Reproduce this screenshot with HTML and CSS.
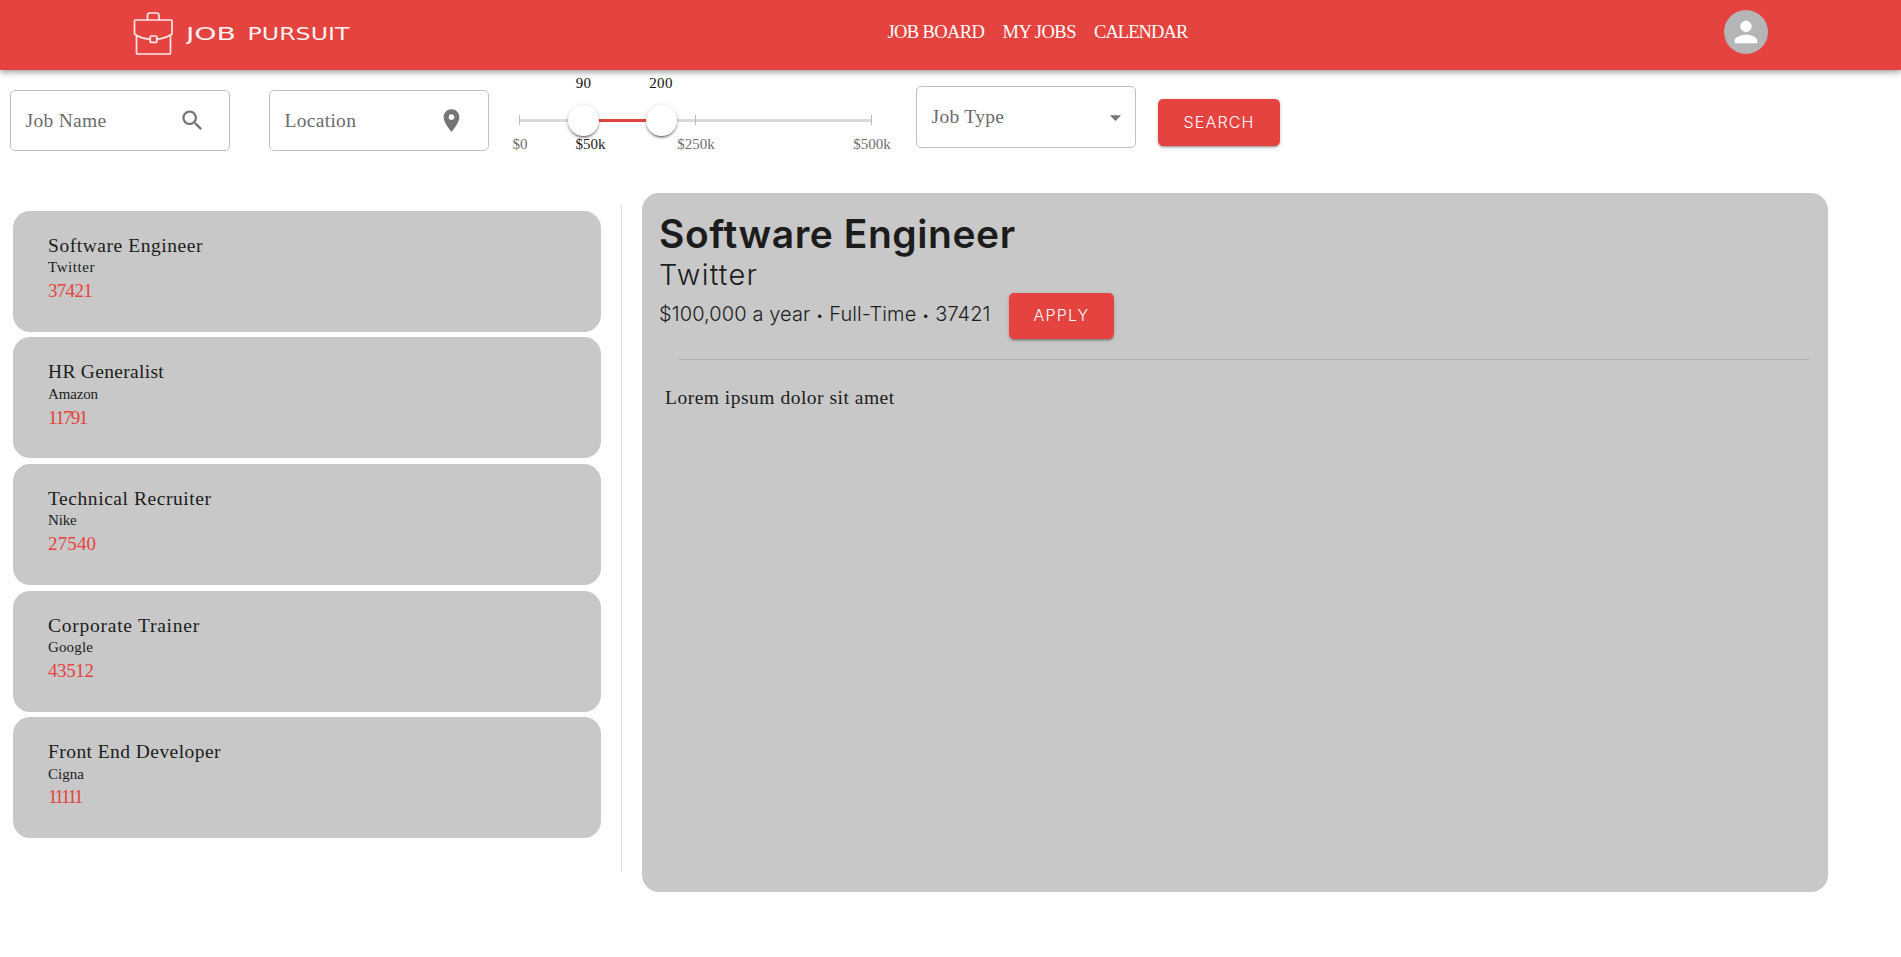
FILE: index.html
```html
<!DOCTYPE html>
<html lang="en">
<head>
<meta charset="utf-8">
<title>Job Pursuit</title>
<link rel="stylesheet" href="styles.css">
</head>
<body>
<header class="bar">
  <div class="brand">
    <svg class="case" viewBox="0 0 41 44" fill="none" stroke="#fff" stroke-opacity=".88" stroke-width="1.7" stroke-linejoin="round"><path d="M14.5 7.500V3.500Q14.500 1 17 1H23.500Q26 1 26 3.500V7.500M2.500 8H38Q39 8 39 9V22Q32 26.500 24 27.200M16.500 27.200Q8 26.500 1.500 22V9Q1.500 8 2.500 8M3.500 23.500V41Q3.500 42 4.500 42H36.500Q37.500 42 37.500 41V23.500"/><rect x="17.200" y="24" width="6.600" height="6.400" rx="1"/></svg>
    <svg class="wordmark" viewBox="0 0 166 20"><text x="0" y="16" textLength="50" lengthAdjust="spacingAndGlyphs">JOB</text><text x="61.500" y="16" textLength="102" lengthAdjust="spacingAndGlyphs">PURSUIT</text></svg>
  </div>
  <nav class="nav"><a class="n1">JOB BOARD</a><a class="n2">MY JOBS</a><a class="n3">CALENDAR</a></nav>
  <div class="avatar"><svg viewBox="0 0 24 24"><path d="M12 12c2.210 0 4-1.790 4-4s-1.790-4-4-4-4 1.790-4 4 1.790 4 4 4zm0 2c-2.670 0-8 1.340-8 4v2h16v-2c0-2.660-5.330-4-8-4z"/></svg></div>
</header>
<section class="filters">
  <div class="field"><span>Job Name</span><svg viewBox="0 0 24 24"><path d="M15.500 14h-.79l-.28-.27C15.410 12.590 16 11.110 16 9.500 16 5.910 13.090 3 9.500 3S3 5.910 3 9.500 5.910 16 9.500 16c1.610 0 3.090-.59 4.230-1.570l.27.28v.79l5 4.990L20.490 19l-4.990-5zm-6 0C7.010 14 5 11.990 5 9.500S7.010 5 9.500 5 14 7.010 14 9.500 11.990 14 9.500 14z"/></svg></div>
  <div class="field"><span>Location</span><svg viewBox="0 0 24 24"><path d="M12 2C8.130 2 5 5.130 5 9c0 5.250 7 13 7 13s7-7.750 7-13c0-3.870-3.130-7-7-7zm0 9.500c-1.380 0-2.500-1.120-2.500-2.500s1.120-2.500 2.500-2.500 2.500 1.120 2.500 2.500-1.120 2.500-2.500 2.500z"/></svg></div>
  <div class="slider">
    <div class="rail"></div><div class="track"></div>
    <i class="mark m0"></i><i class="mark m250"></i><i class="mark m500"></i>
    <b class="thumb t90"></b><b class="thumb t200"></b>
    <span class="lab v90">90</span><span class="lab v200">200</span>
    <span class="lab l0">$0</span><span class="lab l50">$50k</span><span class="lab l250">$250k</span><span class="lab l500">$500k</span>
  </div>
  <div class="field select"><span>Job Type</span><svg viewBox="0 0 24 24"><path d="M7 10l5 5 5-5z"/></svg></div>
  <button class="btn search">SEARCH</button>
</section>
<main class="main">
  <div class="list">
    <article class="card twitter"><h3>Software Engineer</h3><p>Twitter</p><em>37421</em></article>
    <article class="card amazon"><h3>HR Generalist</h3><p>Amazon</p><em>11791</em></article>
    <article class="card nike"><h3>Technical Recruiter</h3><p>Nike</p><em>27540</em></article>
    <article class="card google"><h3>Corporate Trainer</h3><p>Google</p><em>43512</em></article>
    <article class="card cigna"><h3>Front End Developer</h3><p>Cigna</p><em>11111</em></article>
  </div>
  <div class="divider"></div>
  <section class="detail">
    <h1>Software Engineer</h1>
    <h2>Twitter</h2>
    <div class="meta"><span>$100,000 a year <small>•</small> Full-Time <small>•</small> 37421</span><button class="btn apply">APPLY</button></div>
    <hr>
    <p class="desc">Lorem ipsum dolor sit amet</p>
  </section>
</main>
</body>
</html>
```
FILE: styles.css
```css
*{box-sizing:border-box}
body{margin:0;background:#fff;color:#1c1c1c;font-family:"Liberation Serif",serif;font-size:19.5px}
h1,h2,h3,p{margin:0;font-weight:400}
.bar{display:flex;height:70px;background:#e54340;color:#fff;box-shadow:0 2px 4px -1px rgba(0,0,0,.2),0 4px 5px rgba(0,0,0,.14),0 1px 10px rgba(0,0,0,.12)}
.brand{display:flex;width:755px;padding:12px 0 0 133px;gap:12px}
.case{width:41px;height:44px}
.wordmark{width:166px;height:20px;margin-top:12px}
.wordmark text{font:17.5px "DejaVu Sans",sans-serif;fill:#fff;fill-opacity:.95}
.nav{display:flex;width:969px;padding:20px 0 0 132.5px;line-height:25px;white-space:nowrap;font-size:18.5px}
.n1{width:115px;letter-spacing:-.62px}
.n2{width:91.5px;letter-spacing:-.5px}
.n3{letter-spacing:-.92px}
.avatar{width:44px;height:44px;margin-top:10px;border-radius:50%;background:#b5b5b5;display:grid;place-items:center}
.avatar svg{width:34px;fill:#fff}
.filters{display:flex;height:123px;padding:20px 0 0 10px}
.field{width:220px;height:61px;border:1px solid #c1c1c1;border-radius:5px;display:flex;align-items:center;justify-content:space-between;padding:0 23px 0 14.5px;color:#6b6b6b;margin-right:39px;white-space:nowrap;flex:none;letter-spacing:.3px}
.field svg{width:27px;fill:#757575}
.slider{position:relative;width:353px;height:80px;margin:-20px 44px 0 -9px;left:0;font-size:15px}
.rail,.track{position:absolute;top:49px;height:3px;left:0;width:353px;background:#dadada}
.track{left:64px;width:78px;background:#e54340}
.mark{position:absolute;top:45px;width:1px;height:10px;background:#bbb;left:0}
.m250{left:176px}
.m500{left:352px}
.thumb{position:absolute;top:35px;width:31px;height:31px;border-radius:50%;background:#fff;box-shadow:0 3px 1px -2px rgba(0,0,0,.3),0 2px 2px rgba(0,0,0,.26),0 1px 5px rgba(0,0,0,.18)}
.t90{left:49px}
.t200{left:126.500px}
.lab{position:absolute;transform:translateX(-50%);top:64px;line-height:20px;color:#6f6f6f}
.v90,.v200{top:3px;color:#111;letter-spacing:.35px}
.v90{left:64.500px}
.v200{left:142px}
.l0{left:1px}
.l50{left:71.500px;color:#222}
.l250{left:177px}
.l500{left:353px}
.select{height:62px;margin:-4px 22px 0 0;padding-right:6px}
.btn{border:0;padding:0 0 2px;border-radius:5px;background:#e54340;color:#fff;font:300 16px Inter,sans-serif;letter-spacing:1.2px;box-shadow:0 3px 1px -2px rgba(0,0,0,.2),0 2px 2px rgba(0,0,0,.14),0 1px 5px rgba(0,0,0,.12)}
.search{width:122px;height:47px;margin-top:9px}
.main{display:flex;align-items:flex-start}
.list{display:flex;flex-direction:column;gap:5.6px;width:588px;margin:17.8px 20px 0 13px}
.card{height:121px;border-radius:17px;background:#c8c8c8;padding:23px 35px}
.card>*{display:block;white-space:nowrap;font-style:normal}
.card h3{font-size:19.5px;line-height:24px}
.card p{font-size:15px;line-height:19px}
.card em{font-size:19px;color:#e54340;line-height:27px}
.twitter h3{letter-spacing:.55px}
.twitter p{letter-spacing:.56px}
.twitter em{letter-spacing:-.7px}
.amazon h3{letter-spacing:.3px}
.amazon p{letter-spacing:-.14px;padding-top:1px}
.amazon em{letter-spacing:-1.65px}
.nike h3{letter-spacing:.56px}
.nike p{letter-spacing:-.17px}
.nike em{letter-spacing:.15px}
.google h3{letter-spacing:.75px}
.google p{letter-spacing:.14px}
.google em{letter-spacing:-.4px}
.cigna h3{letter-spacing:.44px}
.cigna p{padding-top:1px;margin-bottom:-1px}
.cigna em{letter-spacing:-2.3px}
.divider{width:1px;height:668px;margin:11px 20px 0 0;background:#e0e0e0}
.detail{width:1186px;height:699px;border-radius:17px;background:#c8c8c8;padding:17px 19px 0 17px;font-family:Inter,sans-serif}
h1{font-size:39px;line-height:48px;font-weight:600;letter-spacing:.55px}
h2{font-size:29px;line-height:33px;letter-spacing:1.2px;font-weight:300}
.meta{display:flex;align-items:flex-start;height:48px;font-size:20px;line-height:47px}
.meta span{width:350px;letter-spacing:.1px;white-space:nowrap;font-weight:300}
.meta small{font-size:13px;line-height:1;vertical-align:1px}
.apply{width:105px;height:46px;margin-top:2px}
hr{border:0;height:1px;background:#b0b0b0;margin:20px 0 0 20px}
.desc{font:19.5px/24px "Liberation Serif",serif;letter-spacing:.5px;margin:26px 0 0 6px}
```
